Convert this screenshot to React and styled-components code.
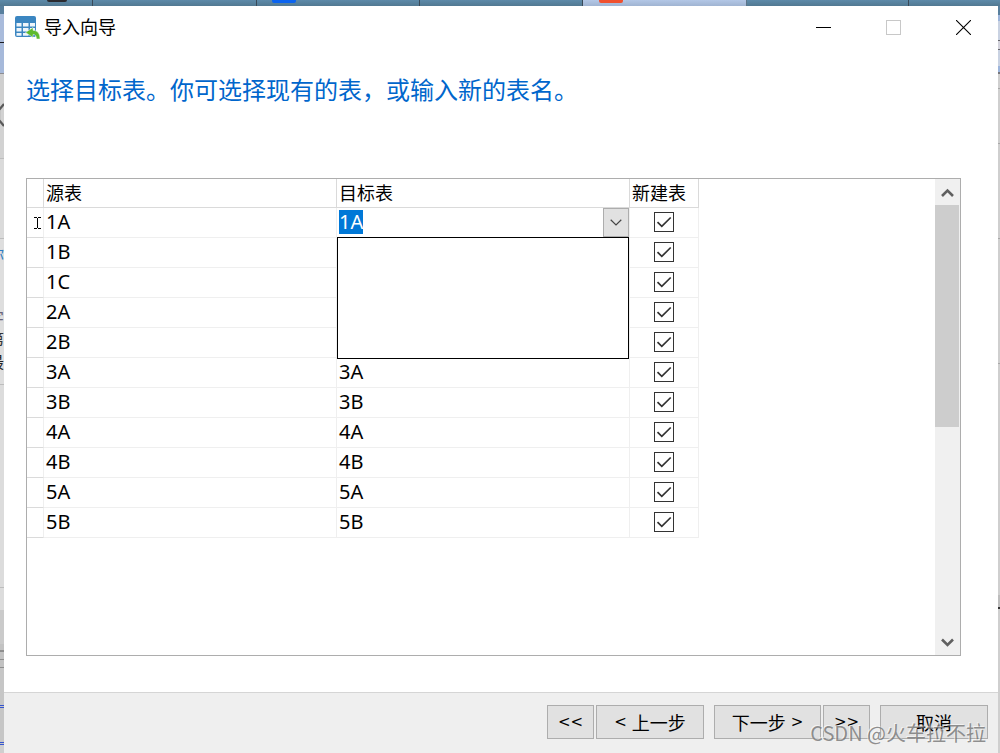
import { useEffect, useRef } from "react"
import styled, { createGlobalStyle } from "styled-components"

const rows = ["1A", "1B", "1C", "2A", "2B", "3A", "3B", "4A", "4B", "5A", "5B"]

const tabs = [
  { width: 93, mark: "#2b2b30", markLeft: 47, markWidth: 20, markHeight: 2 },
  { width: 164 },
  { width: 163, mark: "#0a63f0", markLeft: 15, markWidth: 24, markHeight: 3 },
  { width: 163 },
  { width: 164, active: true, mark: "#f0502e", markLeft: 16, markWidth: 24, markHeight: 3 },
  { width: 162 },
]

const leftStrips = [
  { height: 8, color: "#587f9d" },
  { height: 28, color: "#a9bbdb" },
  { height: 1, color: "#1c1c20" },
  { height: 30, color: "#a6b9da" },
  { height: 1, color: "#8d8d92" },
  { height: 26, color: "#cfcfcf" },
  { height: 28, color: "#d2d2d2", chevron: true },
  { height: 30, color: "#d2d2d2" },
  { height: 1, color: "#bdbdbd" },
  { height: 79, color: "#dadada" },
  { height: 1, color: "#bdbdbd" },
  { height: 5, color: "#dedede" },
  { height: 18, color: "#dedede", text: "你", ink: "#2f7dc4", size: 16 },
  { height: 46, color: "#dedede" },
  { height: 18, color: "#dedede", text: "字", ink: "#6a6478", size: 16 },
  { height: 3, color: "#dedede" },
  { height: 18, color: "#dedede", text: "第", ink: "#333333", size: 16 },
  { height: 5, color: "#dedede" },
  { height: 18, color: "#dedede", text: "最", ink: "#222222", size: 16 },
  { height: 14, color: "#dedede" },
  { height: 1, color: "#bdbdbd" },
  { height: 202, color: "#dcdcdc" },
  { height: 1, color: "#bdbdbd" },
  { height: 22, color: "#dcdcdc" },
  { height: 34, color: "#cacaca" },
  { height: 6, color: "#c2c2c2" },
  { height: 2, color: "#8e8e8e" },
  { height: 7, color: "#c2c2c2" },
  { height: 1, color: "#8e8e8e" },
  { height: 7, color: "#c2c2c2" },
  { height: 1, color: "#8e8e8e" },
  { height: 37, color: "#c6c6c6" },
  { height: 1, color: "#3555d0" },
  { height: 1, color: "#c6c6c6" },
  { height: 1, color: "#3555d0" },
  { height: 34, color: "#c6c6c6" },
  { height: 1, color: "#3555d0" },
  { height: 1, color: "#c6c6c6" },
  { height: 1, color: "#3555d0" },
]

const rightStrips = [
  { height: 9, color: "#587f9d" },
  { height: 6, color: "#9db5dc" },
  { height: 19, color: "#c9d2e2" },
  { height: 1, color: "#66666c" },
  { height: 8, color: "#d3d3dc" },
  { height: 1, color: "#66666c" },
  { height: 16, color: "#c9d2e2" },
  { height: 6, color: "#9db5dc" },
  { height: 2, color: "#77777c" },
  { height: 14, color: "#cfcfcf" },
  { height: 1, color: "#a8a8a8" },
  { height: 54, color: "#cfcfcf" },
  { height: 1, color: "#a8a8a8" },
  { height: 94, color: "#cfcfcf" },
  { height: 1, color: "#a8a8a8" },
  { height: 124, color: "#cfcfcf" },
  { height: 1, color: "#a8a8a8" },
  { height: 231, color: "#cfcfcf" },
  { height: 12, color: "#bdbdbd" },
  { height: 2, color: "#333333" },
]

const App = () => {
  const target = useRef(null)

  useEffect(() => {
    target.current.focus()
    target.current.select()
  }, [])

  return (
    <Desktop>
      <GlobalStyle />
      <TabStrip aria-hidden="true">
        {tabs.map((tab, i) => (
          <BrowserTab key={i} $width={tab.width} $active={tab.active} $left={tab.markLeft}>
            {tab.mark && <TabMark $color={tab.mark} $width={tab.markWidth} $height={tab.markHeight} />}
          </BrowserTab>
        ))}
      </TabStrip>
      <Middle>
        <Edge $width={4} aria-hidden="true">
          {leftStrips.map((strip, i) => (
            <Strip key={i} $height={strip.height} $color={strip.color} $ink={strip.ink} $size={strip.size}>
              {strip.text}
              {strip.chevron && (
                <svg width="4" height="28" viewBox="0 0 4 28">
                  <path d="M5 4l-5 6v10l5 6" transform="translate(-1)" fill="none" stroke="#5a5a5a" strokeWidth="2.2" />
                </svg>
              )}
            </Strip>
          ))}
        </Edge>
        <Dialog role="dialog" aria-labelledby="wizard-title">
          <TitleBar>
            <WizardIcon />
            <WindowTitle id="wizard-title">导入向导</WindowTitle>
            <WindowButton type="button" aria-label="最小化">
              <svg width="15" height="15" viewBox="0 0 15 15" shapeRendering="crispEdges">
                <path d="M0 7.5h15" stroke="#000" />
              </svg>
            </WindowButton>
            <WindowButton type="button" aria-label="最大化" disabled>
              <svg width="15" height="15" viewBox="0 0 15 15" shapeRendering="crispEdges">
                <path d="M.5.5h14v14H.5z" fill="none" stroke="#c8c8c8" />
              </svg>
            </WindowButton>
            <WindowButton type="button" aria-label="关闭">
              <svg width="15" height="15" viewBox="0 0 15 15">
                <path d="M0 0l15 15M15 0L0 15" stroke="#000" strokeWidth="1.1" />
              </svg>
            </WindowButton>
          </TitleBar>
          <Heading>选择目标表。你可选择现有的表，或输入新的表名。</Heading>
          <GridBox>
            <GridArea>
              <Table>
                <colgroup>
                  <Col $width={17} />
                  <Col $width={293} />
                  <Col $width={293} />
                  <Col $width={69} />
                </colgroup>
                <thead>
                  <tr>
                    <HeadCell />
                    <HeadCell scope="col">源表</HeadCell>
                    <HeadCell scope="col">目标表</HeadCell>
                    <HeadCell scope="col">新建表</HeadCell>
                  </tr>
                </thead>
                <tbody>
                  {rows.map((name, i) => (
                    <tr key={name}>
                      <Gutter>{i === 0 && <EditMark />}</Gutter>
                      <Cell>{name}</Cell>
                      {i === 0 ? (
                        <ComboCell>
                          <Combo>
                            <ComboInput
                              ref={target}
                              role="combobox"
                              aria-label="目标表"
                              aria-expanded="true"
                              aria-controls="target-list"
                              defaultValue={name}
                            />
                            <ComboButton type="button" aria-label="展开">
                              <svg width="12" height="7" viewBox="0 0 12 7">
                                <path d="M.7.8L6 6 11.3.8" fill="none" stroke="#444" strokeWidth="1.2" />
                              </svg>
                            </ComboButton>
                            <Popup id="target-list" role="listbox" aria-label="现有的表" />
                          </Combo>
                        </ComboCell>
                      ) : (
                        <Cell>{name}</Cell>
                      )}
                      <CheckCell>
                        <CheckLabel>
                          <Check type="checkbox" defaultChecked aria-label={`新建表 ${name}`} />
                          <Tick width="20" height="20" viewBox="0 0 20 20" aria-hidden="true">
                            <path d="M3.5 10.2l4.3 4.2 8.9-8.9" fill="none" stroke="#333" strokeWidth="1.7" />
                          </Tick>
                        </CheckLabel>
                      </CheckCell>
                    </tr>
                  ))}
                </tbody>
              </Table>
            </GridArea>
            <ScrollBar>
              <ScrollButton type="button" aria-label="向上滚动">
                <svg width="13" height="9" viewBox="0 0 13 9">
                  <path d="M1 8L6.5 2.5 12 8" fill="none" stroke="#606060" strokeWidth="2.6" />
                </svg>
              </ScrollButton>
              <Track>
                <Thumb />
              </Track>
              <ScrollButton type="button" aria-label="向下滚动">
                <svg width="13" height="9" viewBox="0 0 13 9">
                  <path d="M1 1.5L6.5 7 12 1.5" fill="none" stroke="#606060" strokeWidth="2.6" />
                </svg>
              </ScrollButton>
            </ScrollBar>
          </GridBox>
          <Footer>
            <ButtonPair>
              <PushButton type="button" $width={47}><Arrow>&lt;&lt;</Arrow></PushButton>
              <PushButton type="button" $width={108}><Arrow>&lt;</Arrow>上一步</PushButton>
            </ButtonPair>
            <ButtonPair>
              <PushButton type="button" $width={107}>下一步<Arrow>&gt;</Arrow></PushButton>
              <PushButton type="button" $width={47}><Arrow>&gt;&gt;</Arrow></PushButton>
            </ButtonPair>
            <PushButton type="button" $width={108}>取消</PushButton>
          </Footer>
        </Dialog>
        <Edge $width={2} aria-hidden="true">
          {rightStrips.map((strip, i) => (
            <Strip key={i} $height={strip.height} $color={strip.color} />
          ))}
        </Edge>
      </Middle>
      <Watermark>CSDN @火车拉不拉</Watermark>
    </Desktop>
  )
}

export default App

const WizardIcon = () => (
  <svg width="25" height="23" viewBox="0 0 25 23" aria-hidden="true">
    <rect x="0" y="0" width="21" height="21" rx="2" fill="#3b86c1" />
    <path d="M1.5 7h5v3.500h-5zM8 7h5.500v3.500H8zM15 7h5v3.500h-5zM1.500 12h5v3.500h-5zM8 12h5.500v3.500H8zM15 12h5v3.500h-5zM1.500 17h5v2.700h-5zM8 17h5.500v2.700H8z" fill="#eef5fb" />
    <path d="M18 11.500l-7.500 5 7.500 5v-3c2.500 0 3.200 1.500 3.500 4.500h3.500c0-5-2-8.500-7-8.700z" fill="#5fba2d" stroke="#fff" strokeWidth=".5" />
  </svg>
)

const EditMark = () => (
  <svg width="7" height="12" viewBox="0 0 7 12" shapeRendering="crispEdges" aria-hidden="true">
    <path d="M0 .5h3M4 .5h3M3.500 1v10M0 11.500h3M4 11.500h3" stroke="#000" fill="none" />
  </svg>
)

const GlobalStyle = createGlobalStyle`
  * {
    box-sizing: border-box;
  }

  body {
    margin: 0;
    background: #efefef;
    color: #000;
    font-family: "Noto Sans CJK SC", sans-serif;
    font-size: 18px;
  }

  button, input {
    margin: 0;
    padding: 0;
    border: 0;
    border-radius: 0;
    color: inherit;
    font: inherit;
  }
`

const Desktop = styled.div`
  position: relative;
  display: flex;
  flex-direction: column;
  min-height: 100vh;
`

const TabStrip = styled.div`
  display: flex;
  height: 6px;
  overflow: hidden;
  background: linear-gradient(#5d8aa9, #527992);
`

const BrowserTab = styled.div`
  flex: none;
  width: ${({ $width }) => $width}px;
  padding-left: ${({ $left }) => $left || 0}px;
  border-right: 1px solid ${({ $active }) => ($active ? "#5d7488" : "#3a4a58")};
  background: ${({ $active }) => ($active ? "linear-gradient(#b3c7e6, #a0b4d2)" : "none")};
`

const TabMark = styled.div`
  width: ${({ $width }) => $width}px;
  height: ${({ $height }) => $height}px;
  border-radius: 0 0 2px 2px;
  background: ${({ $color }) => $color};
`

const Middle = styled.div`
  flex: 1;
  display: flex;
`

const Edge = styled.div`
  flex: none;
  width: ${({ $width }) => $width}px;
  overflow: hidden;
  background: #cfcfcf;
`

const Strip = styled.div`
  display: flex;
  justify-content: flex-end;
  height: ${({ $height }) => $height}px;
  overflow: hidden;
  background: ${({ $color }) => $color};
  color: ${({ $ink }) => $ink};
  font-size: ${({ $size }) => $size}px;
  line-height: ${({ $height }) => $height}px;
`

const Dialog = styled.main`
  flex: 1;
  display: flex;
  flex-direction: column;
  min-width: 0;
  background: #fff;
`

const TitleBar = styled.header`
  display: flex;
  align-items: center;
  height: 42px;
  padding-left: 11px;
`

const WindowTitle = styled.h1`
  flex: 1;
  margin: 0 0 2px 4px;
  font-size: 18px;
  font-weight: 400;
  line-height: 24px;
`

const WindowButton = styled.button`
  display: grid;
  place-items: center;
  width: 70px;
  height: 42px;
  background: none;
`

const Heading = styled.h2`
  margin: 23px 22px 71px;
  color: #0066cc;
  font-size: 24px;
  font-weight: 400;
  line-height: 36px;
`

const GridBox = styled.section`
  flex: 1;
  display: flex;
  margin: 0 37px 36px 22px;
  border: 1px solid #adadad;
`

const GridArea = styled.div`
  flex: 1;
  min-width: 0;
`

const Table = styled.table`
  border-collapse: separate;
  border-spacing: 0;
  table-layout: fixed;
  width: 672px;
`

const Col = styled.col`
  width: ${({ $width }) => $width}px;
`

const HeadCell = styled.th`
  height: 29px;
  padding: 0 0 2px 2px;
  border-right: 1px solid #dadada;
  border-bottom: 1px solid #dadada;
  font-weight: 400;
  line-height: 26px;
  text-align: left;
`

const Cell = styled.td`
  height: 30px;
  padding: 0 0 2px 2px;
  border-right: 1px solid #efefef;
  border-bottom: 1px solid #efefef;
  font-family: "Noto Sans", sans-serif;
  font-size: 20px;
  line-height: 27px;
`

const Gutter = styled(Cell)`
  padding: 0 2px 0 0;
  border-bottom-color: #dadada;
  line-height: 12px;

  svg {
    display: block;
    margin-left: auto;
  }
`

const ComboCell = styled(Cell)`
  padding: 0;
`

const Combo = styled.div`
  position: relative;
  display: flex;
  align-items: center;
  height: 29px;
`

const ComboInput = styled.input`
  flex: 1;
  min-width: 0;
  height: 24px;
  margin-bottom: 2px;
  padding-left: 2px;
  outline: none;
  background: #fff;
  line-height: 24px;

  &::selection {
    background: #0078d7;
    color: #fff;
  }
`

const ComboButton = styled.button`
  display: grid;
  place-items: center;
  width: 26px;
  height: 29px;
  border: 1px solid #adadad;
  background: #e1e1e1;
`

const Popup = styled.div`
  position: absolute;
  z-index: 1;
  top: 100%;
  left: 0;
  width: 100%;
  height: 122px;
  border: 1px solid #000;
  background: #fff;
`

const CheckCell = styled(Cell)`
  padding: 0 0 1px;
`

const CheckLabel = styled.label`
  display: grid;
  place-content: center;
`

const Check = styled.input`
  grid-area: 1 / 1;
  width: 20px;
  height: 20px;
  border: 1px solid #333;
  appearance: none;
  background: #fff;
`

const Tick = styled.svg`
  grid-area: 1 / 1;
  visibility: hidden;
  pointer-events: none;

  ${Check}:checked + & {
    visibility: visible;
  }
`

const ScrollBar = styled.div`
  display: flex;
  flex-direction: column;
  width: 25px;
  background: #f0f0f0;
`

const ScrollButton = styled.button`
  display: grid;
  place-items: center;
  height: 26px;
  background: none;
`

const Track = styled.div`
  flex: 1;
  padding-right: 1px;
`

const Thumb = styled.div`
  height: 222px;
  background: #cdcdcd;
`

const Footer = styled.footer`
  display: flex;
  justify-content: flex-end;
  gap: 10px;
  height: 61px;
  padding: 12px 10px 0;
  border-top: 1px solid #d5d5d5;
  background: #efefef;
`

const ButtonPair = styled.div`
  display: flex;
  gap: 2px;
`

const PushButton = styled.button`
  display: flex;
  align-items: center;
  justify-content: center;
  gap: 5px;
  width: ${({ $width }) => $width}px;
  height: 34px;
  border: 1px solid #adadad;
  background: #e1e1e1;
  line-height: 24px;
`

const Arrow = styled.span`
  font-family: "DejaVu Sans", sans-serif;
  font-size: 15px;
`

const Watermark = styled.div`
  position: absolute;
  right: 14px;
  bottom: 6px;
  color: rgba(110, 110, 110, 0.75);
  font-size: 20px;
  line-height: 28px;
  text-shadow: -1px -1px 0 rgba(255, 255, 255, 0.6);
  pointer-events: none;
`
